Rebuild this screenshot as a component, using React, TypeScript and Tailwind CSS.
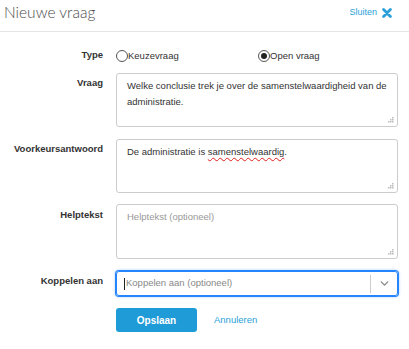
import { ChevronDown } from "lucide-react";

function ResizeGrip() {
  return (
    <svg className="absolute bottom-[3px] right-[3px]" width="7" height="7" viewBox="0 0 7 7">
      <rect x="5" y="1" width="1.5" height="1.5" fill="#bbb" />
      <rect x="3" y="3" width="1.5" height="1.5" fill="#bbb" />
      <rect x="5" y="3" width="1.5" height="1.5" fill="#bbb" />
      <rect x="1" y="5" width="1.5" height="1.5" fill="#bbb" />
      <rect x="3" y="5" width="1.5" height="1.5" fill="#bbb" />
      <rect x="5" y="5" width="1.5" height="1.5" fill="#bbb" />
    </svg>
  );
}

function Radio({ checked, label }: { checked?: boolean; label: string }) {
  return (
    <div className="flex items-center">
      <span className="flex h-[12px] w-[12px] items-center justify-center rounded-full border border-[#555] bg-white">
        {checked && <span className="h-[6px] w-[6px] rounded-full bg-[#222]" />}
      </span>
      <span className="text-[9.5px] text-[#333]">{label}</span>
    </div>
  );
}

function Row({ label, children, labelPad = "pt-[3px]" }: { label: string; children: React.ReactNode; labelPad?: string }) {
  return (
    <div className="flex">
      <div className={`w-[104px] shrink-0 whitespace-nowrap pr-[1px] text-right text-[9.5px] font-bold leading-[12px] text-[#333] ${labelPad}`}>
        {label}
      </div>
      <div className="ml-[12px] w-[282px]">{children}</div>
    </div>
  );
}

export default function App() {
  return (
    <div className="h-[349px] w-[409px] bg-white font-['Liberation_Sans',Arial,sans-serif]">
      <header className="flex h-[32px] items-center justify-between border-b border-[#e5e5e5] pl-[4px] pr-[17px]">
        <h1 className="pb-[5px] font-['Lato','Liberation_Sans',sans-serif] text-[15.5px] font-light text-[#4a4a4a]">Nieuwe vraag</h1>
        <button className="flex items-center gap-[5px] pb-[6px] text-[9px] text-[#2a9fd8]">
          Sluiten
          <svg width="10" height="10" viewBox="0 0 10 10">
            <path d="M1.6 1.6 L8.4 8.4 M8.4 1.6 L1.6 8.4" stroke="#2a9fd8" strokeWidth="2.8" strokeLinecap="round" />
          </svg>
        </button>
      </header>

      <div className="flex flex-col pt-[17px]">
        <div className="h-[12px]">
          <Row label="Type" labelPad="pt-0">
            <div className="grid grid-cols-2 items-center">
              <Radio label="Keuzevraag" />
              <div className="pl-[1px]">
                <Radio checked label="Open vraag" />
              </div>
            </div>
          </Row>
        </div>

        <div className="mt-[12px]">
          <Row label="Vraag" labelPad="pt-[4px]">
            <div className="relative h-[54px] rounded-[3px] border border-[#ccc] pl-[10px] pr-[8px] pt-[4px] text-[9.5px] leading-[16px] text-[#333]">
              Welke conclusie trek je over de samenstelwaardigheid van de administratie.
              <ResizeGrip />
            </div>
          </Row>
        </div>

        <div className="mt-[12px]">
          <Row label="Voorkeursantwoord" labelPad="pt-[4px]">
            <div className="relative h-[54px] rounded-[3px] border border-[#ccc] pl-[10px] pr-[8px] pt-[4px] text-[9.5px] leading-[16px] text-[#333]">
              De administratie is{" "}
              <span className="underline decoration-[#e02020] decoration-wavy decoration-1 underline-offset-[2px]">samenstelwaardig</span>.
              <ResizeGrip />
            </div>
          </Row>
        </div>

        <div className="mt-[11px]">
          <Row label="Helptekst" labelPad="pt-[5px]">
            <div className="relative h-[55px] rounded-[3px] border border-[#ccc] pl-[10px] pr-[8px] pt-[4px] text-[9.5px] leading-[16px] text-[#999]">
              Helptekst (optioneel)
              <ResizeGrip />
            </div>
          </Row>
        </div>

        <div className="mt-[12px]">
          <Row label="Koppelen aan" labelPad="pt-[4px]">
            <div className="flex h-[25px] items-center rounded-[3px] border border-[#2684ff] shadow-[0_0_0_1px_#2684ff,0_0_2px_2px_#d8e9fb]">
              <div className="flex flex-1 items-center pl-[7px] text-[9.5px] text-[#888]">
                <span className="mr-[1px] h-[12px] w-px bg-[#222]" />
                Koppelen aan (optioneel)
              </div>
              <span className="h-[18px] w-px bg-[#ccc]" />
              <div className="flex w-[26px] justify-center">
                <ChevronDown size={13} strokeWidth={2.5} color="#888" />
              </div>
            </div>
          </Row>
        </div>

        <div className="mt-[12px] flex pl-[116px]">
          <button className="h-[24px] w-[81px] rounded-[3px] bg-[#1f9bd7] text-[10px] font-bold text-white">Opslaan</button>
          <button className="ml-[17px] text-[9.5px] text-[#2a9fd8]">Annuleren</button>
        </div>
      </div>
    </div>
  );
}
